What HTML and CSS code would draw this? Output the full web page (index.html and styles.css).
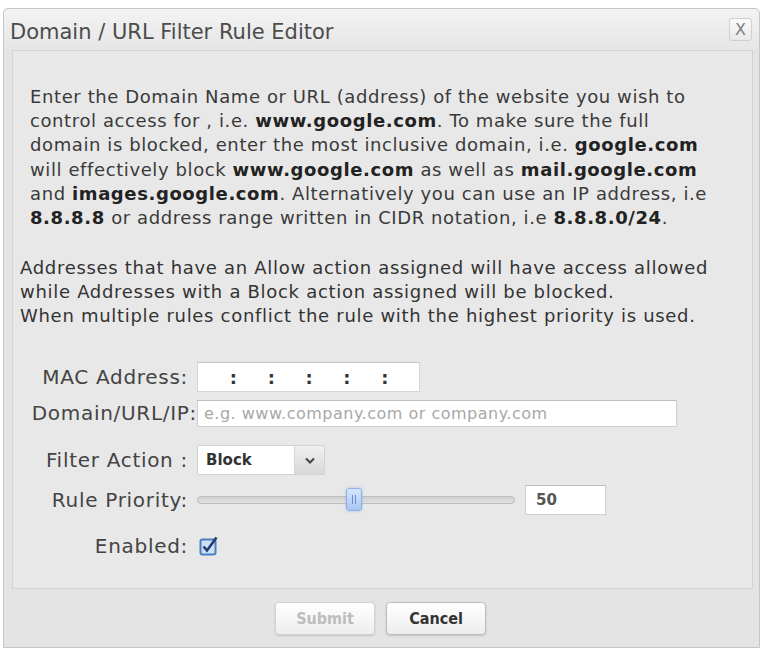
FILE: index.html
```html
<!DOCTYPE html>
<html lang="en">
<head>
  <meta charset="UTF-8">
  <title>Domain / URL Filter Rule Editor</title>
  <link rel="stylesheet" href="styles.css">
</head>
<body>
<div class="dialog">
  <div class="titlebar">
    <span class="title">Domain / URL Filter Rule Editor</span>
    <span class="close">X</span>
  </div>
  <div class="panel">
    <p class="intro">Enter the Domain Name or URL (address) of the website you wish to<br>
      control access for , i.e. <b>www.google.com</b>. To make sure the full<br>
      domain is blocked, enter the most inclusive domain, i.e. <b>google.com</b><br>
      will effectively block <b>www.google.com</b> as well as <b>mail.google.com</b><br>
      and <b>images.google.com</b>. Alternatively you can use an IP address, i.e<br>
      <b>8.8.8.8</b> or address range written in CIDR notation, i.e <b>8.8.8.0/24</b>.</p>
    <p class="note">Addresses that have an Allow action assigned will have access allowed<br>
      while Addresses with a Block action assigned will be blocked.<br>
      When multiple rules conflict the rule with the highest priority is used.</p>

    <div class="form">
      <div class="row">
        <label>MAC Address:</label>
        <div class="mac">
          <span class="oct"></span><span class="colon">:</span>
          <span class="oct"></span><span class="colon">:</span>
          <span class="oct"></span><span class="colon">:</span>
          <span class="oct"></span><span class="colon">:</span>
          <span class="oct"></span><span class="colon">:</span>
          <span class="oct"></span>
        </div>
      </div>
      <div class="row row-domain">
        <label class="wide">Domain/URL/IP:</label>
        <div class="text-input domain"><span class="placeholder">e.g. www.company.com or company.com</span></div>
      </div>
      <div class="row row-action">
        <label>Filter Action :</label>
        <div class="select">
          <span class="select-value">Block</span>
          <span class="select-arrow">
            <svg width="10" height="7" viewBox="0 0 10 7"><path d="M1 1.5 L5 5.5 L9 1.5" fill="none" stroke="#444" stroke-width="2"/></svg>
          </span>
        </div>
      </div>
      <div class="row row-priority">
        <label>Rule Priority:</label>
        <div class="slider">
          <div class="track"></div>
          <div class="handle"><i></i><i></i></div>
        </div>
        <div class="text-input number">50</div>
      </div>
      <div class="row row-enabled">
        <label>Enabled:</label>
        <span class="checkbox">
          <svg width="20" height="20" viewBox="0 0 20 20">
            <rect x="1.5" y="3.5" width="15" height="15" rx="2" fill="#cfe0f6" stroke="#4a7fc4" stroke-width="2"/>
            <path d="M4.5 10.5 L8 14.5 L17.5 1.5" fill="none" stroke="#1f3f6e" stroke-width="2.6"/>
          </svg>
        </span>
      </div>
    </div>
  </div>
  <div class="footer">
    <button class="btn" disabled>Submit</button>
    <button class="btn">Cancel</button>
  </div>
</div>
</body>
</html>
```

FILE: styles.css
```css
* {
  box-sizing: border-box;
}

html, body {
  margin: 0;
  padding: 0;
  background: #fff;
  font-family: "DejaVu Sans", Verdana, sans-serif;
  color: #3a3a3a;
}

.dialog {
  margin: 8px 0 0 3px;
  width: 757px;
  height: 640px;
  border: 1px solid #c6c6c6;
  border-radius: 5px 5px 0 0;
  background: #e4e4e4;
  display: flex;
  flex-direction: column;
}

.titlebar {
  height: 41px;
  display: flex;
  align-items: center;
  justify-content: space-between;
  padding: 0 7px 0 6px;
  background: linear-gradient(#f3f3f3, #e6e6e6);
  border-radius: 5px 5px 0 0;
}

.title {
  font-size: 21px;
  color: #4c4c4c;
  padding-top: 4px;
}

.close {
  width: 23px;
  height: 23px;
  border: 1px solid #d0d0d0;
  border-radius: 3px;
  background: linear-gradient(#fbfbfb, #e8e8e8);
  color: #808080;
  font: 16px "DejaVu Sans", sans-serif;
  display: flex;
  align-items: center;
  justify-content: center;
}

.panel {
  margin: 0 6px 0 8px;
  height: 539px;
  border: 1px solid #d3d3d3;
  background: #e8e8e8;
  padding: 34px 0 0 7px;
}

.panel p {
  margin: 0;
  white-space: nowrap;
}

.intro {
  margin-left: 10px !important;
  font-size: 18px;
  line-height: 24.2px;
  letter-spacing: 0.6px;
}

.intro b {
  color: #222;
}

.note {
  margin-top: 26px !important;
  font-size: 18px;
  line-height: 24px;
  letter-spacing: 0.7px;
  color: #333;
}

.form {
  margin-top: 34px;
}

.row {
  display: flex;
  align-items: center;
  height: 30px;
  gap: 9px;
}

.row label {
  flex: none;
  width: 168px;
  text-align: right;
  font-size: 20px;
  letter-spacing: 0.7px;
  color: #444;
  white-space: nowrap;
}

.row-domain {
  margin-top: 6px;
  gap: 0;
}

.row label.wide {
  width: 177px;
}

.row-action {
  margin-top: 17px;
}

.row-priority {
  margin-top: 10px;
}

.row-enabled {
  margin-top: 16px;
}

.mac {
  width: 223px;
  height: 30px;
  display: flex;
  align-items: center;
  background: #fff;
  border: 1px solid #d6d6d6;
  border-top-color: #c4c4c4;
}

.mac .oct {
  flex: 1;
}

.mac .colon {
  font-size: 18px;
  font-weight: bold;
  color: #333;
  width: 6px;
  text-align: center;
}

.text-input {
  background: #fff;
  border: 1px solid #cfcfcf;
  border-top-color: #bdbdbd;
  display: flex;
  align-items: center;
}

.domain {
  width: 480px;
  height: 27px;
  padding-left: 6px;
}

.placeholder {
  font-size: 16px;
  letter-spacing: 0.5px;
  color: #a8a8a8;
}

.select {
  width: 128px;
  height: 30px;
  display: flex;
  background: #fff;
  border: 1px solid #d2d2d2;
  border-radius: 2px;
}

.select-value {
  flex: 1;
  padding-left: 8px;
  font-size: 15px;
  font-weight: bold;
  color: #333;
  display: flex;
  align-items: center;
}

.select-arrow {
  width: 30px;
  background: linear-gradient(#f0f0f0, #d8d8d8);
  border-left: 1px solid #d6d6d6;
  display: flex;
  align-items: center;
  justify-content: center;
}

.slider {
  position: relative;
  width: 318px;
  height: 24px;
  display: flex;
  align-items: center;
}

.track {
  width: 100%;
  height: 8px;
  border: 1px solid #bdbdbd;
  border-radius: 4px;
  background: linear-gradient(#cfcfcf, #e2e2e2);
}

.handle {
  position: absolute;
  left: 149px;
  top: 0;
  width: 16px;
  height: 23px;
  border: 1px solid #8fb2e6;
  border-radius: 3px;
  background: linear-gradient(#d6e5fb, #a9c6f0);
  box-shadow: 0 0 3px rgba(120, 160, 230, 0.6);
  display: flex;
  align-items: center;
  justify-content: center;
  gap: 2px;
}

.handle i {
  width: 1px;
  height: 9px;
  background: #6b8fc8;
}

.number {
  width: 81px;
  height: 30px;
  margin-left: 1px;
  padding-left: 10px;
  font-size: 15px;
  font-weight: bold;
  color: #555;
}

.checkbox {
  margin-left: 2px;
  width: 20px;
  height: 20px;
  display: flex;
}

.footer {
  flex: 1;
  display: flex;
  align-items: center;
  justify-content: center;
  gap: 11px;
  padding-right: 2px;
}

.btn {
  width: 100px;
  height: 33px;
  border: 1px solid #bcbcbc;
  border-radius: 4px;
  background: linear-gradient(#ffffff, #ededed);
  box-shadow: 0 1px 2px rgba(0, 0, 0, 0.15);
  font: bold 16px "DejaVu Sans Condensed", "DejaVu Sans", sans-serif;
  color: #333;
}

.btn:disabled {
  color: #bdbdbd;
  border-color: #d2d2d2;
}
```
